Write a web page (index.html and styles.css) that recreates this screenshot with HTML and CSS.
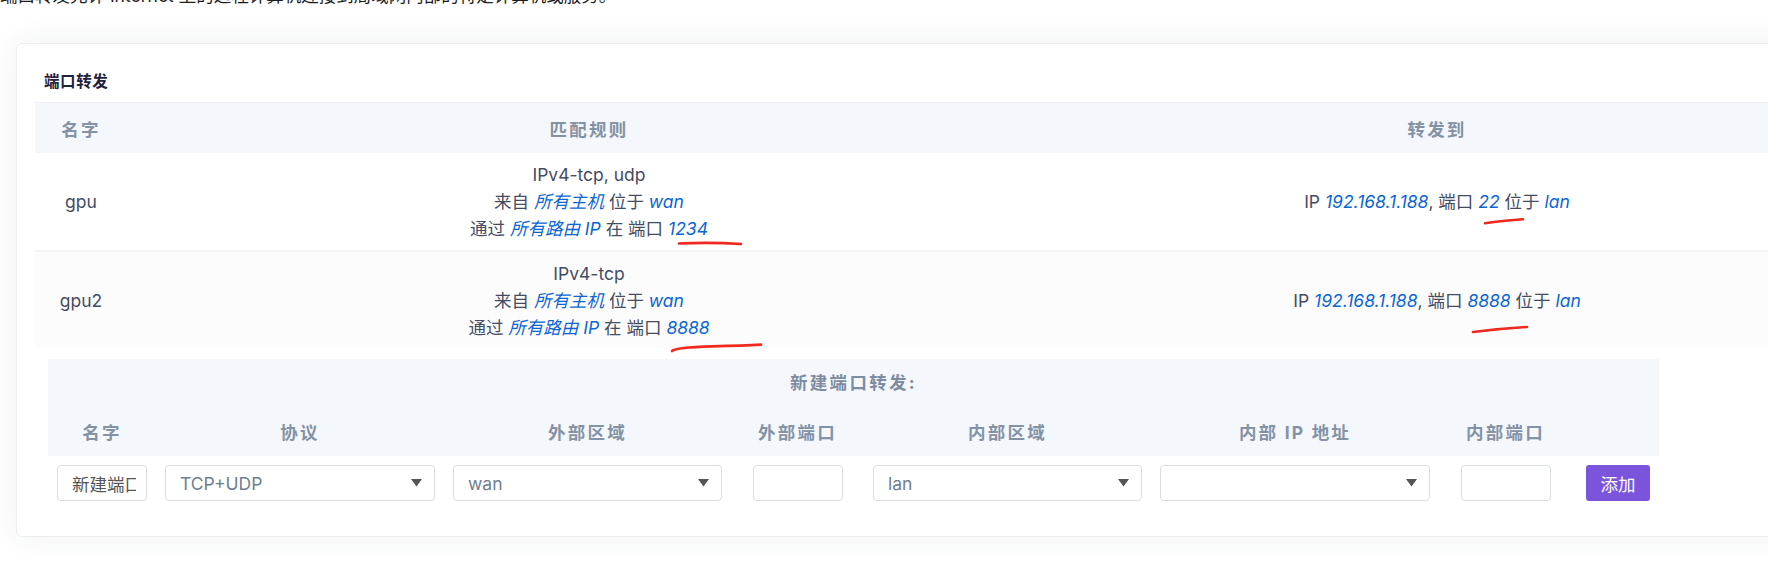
FILE: index.html
```html
<!DOCTYPE html>
<html lang="zh-CN">
<head>
<meta charset="utf-8">
<title>端口转发</title>
<link rel="stylesheet" href="styles.css">
</head>
<body>
<div class="intro">端口转发允许 Internet 上的远程计算机连接到局域网内部的特定计算机或服务。</div>

<div class="card">
  <div class="card-title">端口转发</div>
  <div class="tbl">
    <div class="tr thead">
      <div class="cell">名字</div>
      <div class="cell">匹配规则</div>
      <div class="cell">转发到</div>
    </div>
    <div class="tr row">
      <div class="cell">gpu</div>
      <div class="cell">
        <div>IPv4-tcp, udp</div>
        <div>来自 <em class="v">所有主机</em> 位于 <em class="v">wan</em></div>
        <div>通过 <em class="v">所有路由 IP</em> 在 端口 <em class="v">1234</em></div>
      </div>
      <div class="cell">IP <em class="v">192.168.1.188</em>, 端口 <em class="v">22</em> 位于 <em class="v">lan</em></div>
    </div>
    <div class="tr row">
      <div class="cell">gpu2</div>
      <div class="cell">
        <div>IPv4-tcp</div>
        <div>来自 <em class="v">所有主机</em> 位于 <em class="v">wan</em></div>
        <div>通过 <em class="v">所有路由 IP</em> 在 端口 <em class="v">8888</em></div>
      </div>
      <div class="cell">IP <em class="v">192.168.1.188</em>, 端口 <em class="v">8888</em> 位于 <em class="v">lan</em></div>
    </div>
  </div>

  <div class="add">
    <div class="add-head">
      <div class="add-title">新建端口转发:</div>
      <div class="add-grid add-labels">
        <div class="acell">名字</div>
        <div class="acell">协议</div>
        <div class="acell">外部区域</div>
        <div class="acell">外部端口</div>
        <div class="acell">内部区域</div>
        <div class="acell">内部 IP 地址</div>
        <div class="acell">内部端口</div>
        <div class="acell"></div>
      </div>
    </div>
    <div class="add-grid add-inputs">
      <div class="acell"><input class="txt name" type="text" value="新建端口转发"></div>
      <div class="acell"><div class="sel"><span class="sel-val">TCP+UDP</span><svg class="caret" width="11" height="8" viewBox="0 0 11 8"><path d="M0 0H11L5.5 7.5Z" fill="#555"/></svg></div></div>
      <div class="acell"><div class="sel"><span class="sel-val">wan</span><svg class="caret" width="11" height="8" viewBox="0 0 11 8"><path d="M0 0H11L5.5 7.5Z" fill="#555"/></svg></div></div>
      <div class="acell"><input class="txt port" type="text" value=""></div>
      <div class="acell"><div class="sel"><span class="sel-val">lan</span><svg class="caret" width="11" height="8" viewBox="0 0 11 8"><path d="M0 0H11L5.5 7.5Z" fill="#555"/></svg></div></div>
      <div class="acell"><div class="sel"><span class="sel-val"></span><svg class="caret" width="11" height="8" viewBox="0 0 11 8"><path d="M0 0H11L5.5 7.5Z" fill="#555"/></svg></div></div>
      <div class="acell"><input class="txt port" type="text" value=""></div>
      <div class="acell btn-cell"><button class="btn">添加</button></div>
    </div>
  </div>
</div>

<svg class="marks" width="1768" height="565" viewBox="0 0 1768 565">
  <path d="M679 243.5 C700 242.6 722 242.8 741 244" />
  <path d="M672 351 C675 348 690 347 712 346.4 S750 345.2 761 344.6" />
  <path d="M1485 223.2 C1494 221.6 1509 220.2 1523 219.2" />
  <path d="M1473 332 C1489 330 1510 328 1527 327" />
</svg>
</body>
</html>
```

FILE: styles.css
```css
html, body {
  margin: 0;
  padding: 0;
  overflow: hidden;
  background: #fff;
}

body {
  width: 1768px;
  height: 565px;
  position: relative;
  font-family: Inter, "Noto Sans CJK SC", sans-serif;
  font-size: 17.5px;
  color: #444b63;
}

.intro {
  margin-top: -15px;
  height: 22px;
  line-height: 22px;
  white-space: nowrap;
  color: #1d1d1f;
}

.card {
  margin-top: 36px;
  margin-left: 16px;
  width: 1826px;
  box-sizing: border-box;
  background: #fff;
  border: 1px solid #eceef2;
  border-radius: 6px;
  box-shadow: 0 0 32px rgba(40, 50, 80, 0.07);
  padding: 0 18px 26px;
}

.card-title {
  padding: 27px 0 9px 9px;
  line-height: 22px;
  font-size: 15.5px;
  font-weight: 700;
  letter-spacing: 0.6px;
  color: #1f2140;
}

.tbl {
  border-top: 1px solid #eceef2;
}

.tr {
  display: grid;
  grid-template-columns: 92px 924px 772px;
  align-items: center;
  text-align: center;
}

.thead {
  height: 50px;
  background: #f4f7fb;
  font-weight: 700;
  letter-spacing: 2.2px;
  color: #8492a6;
}

.row {
  padding: 8px 0;
  line-height: 27px;
}

.row + .row {
  border-top: 2px solid #f2f3f6;
  padding: 7.5px 0;
  background: #fcfcfd;
}

.v {
  color: #0b66d4;
  font-style: italic;
}

.add {
  margin: 11px 0 0 13px;
  width: 1611px;
}

.add-head {
  background: #f4f7fb;
}

.add-title {
  height: 47px;
  line-height: 47px;
  text-align: center;
  font-weight: 700;
  letter-spacing: 2.3px;
  color: #7e8ca1;
}

.add-grid {
  display: grid;
  grid-template-columns: 108px 288px 287px 133px 287px 288px 133px 87px;
  align-items: center;
}

.add-labels {
  height: 50px;
  font-weight: 700;
  letter-spacing: 2.2px;
  color: #8492a6;
}

.add-inputs {
  padding: 9px 0;
}

.acell {
  padding: 0 9px;
  display: flex;
  justify-content: center;
  align-items: center;
  white-space: pre;
}

.txt {
  box-sizing: border-box;
  height: 36px;
  border: 1px solid #d9dde4;
  border-radius: 4px;
  background: #fff;
  font-family: Inter, "Noto Sans CJK SC", sans-serif;
  font-size: 17.5px;
  color: #555;
  outline: none;
}

.name {
  width: 90px;
  padding: 0 10px 0 14px;
}

.port {
  width: 90px;
  padding: 0 8px;
}

.sel {
  box-sizing: border-box;
  width: 100%;
  height: 36px;
  border: 1px solid #d9dde4;
  border-radius: 4px;
  background: #fff;
  display: flex;
  align-items: center;
  justify-content: space-between;
  padding: 0 12px 0 14px;
}

.sel-val {
  color: #6f7d92;
}

.caret {
  display: block;
}

.btn-cell {
  justify-content: flex-end;
}

.btn {
  width: 64px;
  height: 36px;
  border: none;
  border-radius: 3px;
  background: #7a55dc;
  color: #fff;
  font-family: Inter, "Noto Sans CJK SC", sans-serif;
  font-size: 17.5px;
  padding: 0;
}

.marks {
  position: absolute;
  left: 0;
  top: 0;
  pointer-events: none;
}

.marks path {
  fill: none;
  stroke: #f0281e;
  stroke-width: 2.6;
  stroke-linecap: round;
}
```
